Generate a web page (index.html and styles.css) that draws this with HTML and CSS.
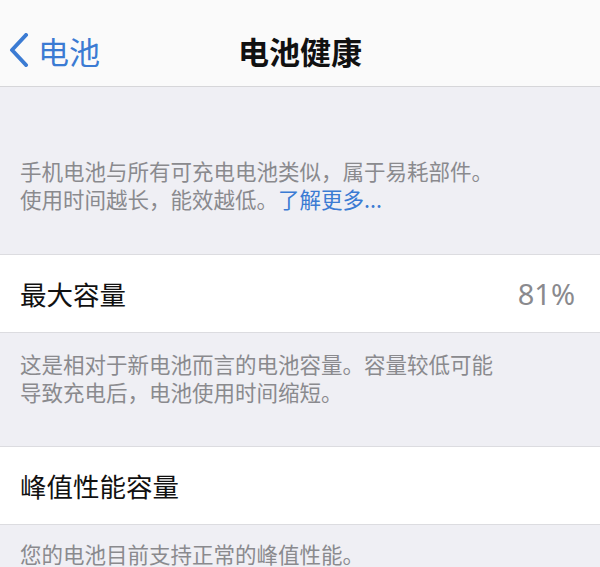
FILE: index.html
```html
<!DOCTYPE html>
<html lang="zh-CN">
<head>
<meta charset="utf-8">
<title>电池健康</title>
<link rel="stylesheet" href="styles.css">
</head>
<body>
<div class="screen">
  <header class="nav">
    <a class="back">
      <svg class="chev" width="20" height="34" viewBox="0 0 20 34"><path d="M17 2 L3 17 L17 32" fill="none" stroke="#3b7bd3" stroke-width="4" stroke-linecap="round" stroke-linejoin="round"/></svg>
      <span class="back-text">电池</span>
    </a>
    <h1 class="title">电池健康</h1>
    <span></span>
  </header>

  <p class="footer first">手机电池与所有可充电电池类似，属于易耗部件。<br>使用时间越长，能效越低。<a class="link">了解更多...</a></p>

  <div class="row">
    <span class="label">最大容量</span>
    <span class="value">81%</span>
  </div>
  <p class="footer">这是相对于新电池而言的电池容量。容量较低可能<br>导致充电后，电池使用时间缩短。</p>

  <div class="row">
    <span class="label">峰值性能容量</span>
  </div>
  <p class="footer last">您的电池目前支持正常的峰值性能。</p>
</div>
</body>
</html>
```

FILE: styles.css
```css
* { box-sizing: border-box; }
html, body { margin: 0; padding: 0; }
body {
  background: #efeff4;
  font-family: "Noto Sans CJK SC", "Noto Sans", sans-serif;
  width: 600px;
  height: 567px;
  overflow: hidden;
}
.screen { display: flex; flex-direction: column; }
.nav {
  height: 87px;
  padding-top: 15px;
  background: #fafafa;
  border-bottom: 1px solid #d6d6d9;
  display: grid;
  grid-template-columns: 1fr auto 1fr;
  align-items: center;
}
.back {
  display: flex;
  align-items: center;
  color: #3b7bd3;
  padding-left: 9px;
}
.chev { display: block; margin-top: -2px; }
.back-text {
  font-size: 31px;
  line-height: 40px;
  margin-left: 9px;
}
.title {
  margin: 0;
  font-size: 31px;
  font-weight: 600;
  line-height: 40px;
  color: #111;
}
.footer {
  margin: 0;
  color: #8a8a8e;
  font-size: 21.5px;
  line-height: 28px;
  padding: 17px 20px 40px;
}
.footer.first { padding-top: 70px; padding-bottom: 41px; }
.footer.last { padding-top: 15px; padding-bottom: 0; }
.link { color: #3b7bd3; }
.row {
  background: #fff;
  height: 79px;
  border-top: 1px solid #dcdce0;
  border-bottom: 1px solid #dcdce0;
  display: flex;
  align-items: center;
  justify-content: space-between;
  padding: 0 25px 0 20px;
}
.label {
  font-size: 26.5px;
  color: #111;
  line-height: 36px;
}
.value {
  font-size: 29px;
  color: #8a8a8e;
  line-height: 36px;
  font-family: "Noto Sans", "Noto Sans CJK SC", sans-serif;
}
```
